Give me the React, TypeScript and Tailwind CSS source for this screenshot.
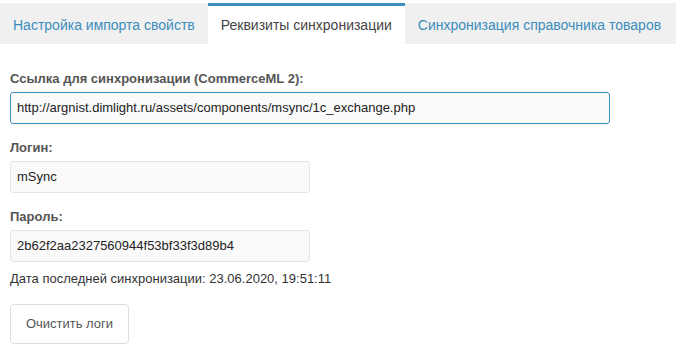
import React from "react";

const tabs = [
  { label: "Настройка импорта свойств", active: false },
  { label: "Реквизиты синхронизации", active: true },
  { label: "Синхронизация справочника товаров", active: false },
];

function Field({ label, value, focused, wide }: { label: string; value: string; focused?: boolean; wide?: boolean }) {
  return (
    <div className="flex flex-col">
      <div className="text-[13px] font-bold leading-[18px] text-[#555]">{label}</div>
      <div
        className={
          "mt-[4px] flex h-[32px] items-center rounded-[3px] border bg-[#fafafa] px-[6px] text-[13px] text-[#222] " +
          (wide ? "w-[600px] " : "w-[300px] ") +
          (focused ? "border-[#3c8dbc]" : "border-[#e3e3e3]")
        }
      >
        {value}
      </div>
    </div>
  );
}

export default function App() {
  return (
    <div className="h-[354px] w-[676px] bg-white pt-[3px] font-['Liberation_Sans',Arial,sans-serif]">
      {/* tabs */}
      <div className="flex h-[41px] bg-[#f0f0f0]">
        {tabs.map((t) =>
          t.active ? (
            <div
              key={t.label}
              className="flex items-center border-t-[3px] border-[#3c8dbc] bg-white px-[13px] text-[14px] text-[#444]"
            >
              {t.label}
            </div>
          ) : (
            <div key={t.label} className="flex items-center border-t-[3px] border-transparent px-[13px] text-[14px] text-[#3c8dbc]">
              {t.label}
            </div>
          )
        )}
      </div>

      <div className="flex flex-col px-[10px] pt-[26px]">
        <Field label="Ссылка для синхронизации (CommerceML 2):" value="http://argnist.dimlight.ru/assets/components/msync/1c_exchange.php" focused wide />
        <div className="mt-[15px]">
          <Field label="Логин:" value="mSync" />
        </div>
        <div className="mt-[15px]">
          <Field label="Пароль:" value="2b62f2aa2327560944f53bf33f3d89b4" />
        </div>
        <div className="mt-[8px] text-[13px] leading-[18px] text-[#333]">Дата последней синхронизации: 23.06.2020, 19:51:11</div>
        <button className="mt-[16px] flex h-[40px] w-[119px] items-center justify-center rounded-[4px] border border-[#ddd] bg-white text-[13px] text-[#555]">
          Очистить логи
        </button>
      </div>
    </div>
  );
}
